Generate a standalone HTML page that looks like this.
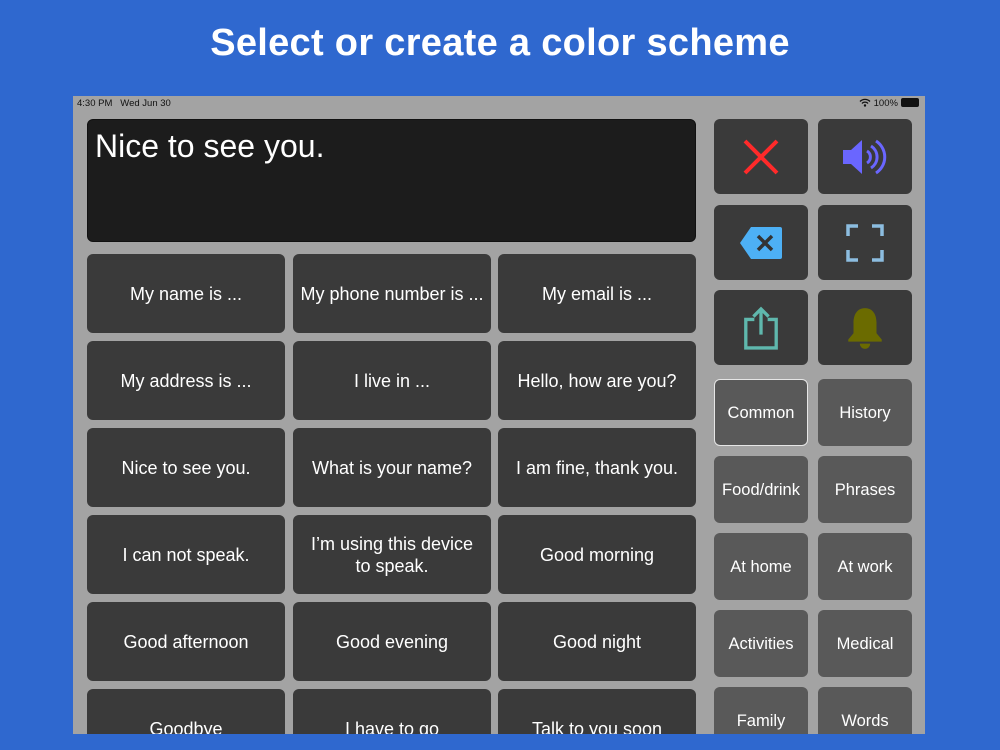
<!DOCTYPE html><html><head><style>
body{margin:0;width:1000px;height:750px;background:#2f68cf;position:relative;overflow:hidden;font-family:"Liberation Sans",sans-serif}
.t{position:absolute;top:22px;left:0;width:1000px;text-align:center;color:#fff;font-size:38px;font-weight:bold;letter-spacing:0.3px}
.s{position:absolute;left:73px;top:96px;width:852px;height:638px;background:#a3a3a3;overflow:hidden}
.b{position:absolute;border-radius:6px;background:#3a3a3a;color:#fff;display:flex;align-items:center;justify-content:center;text-align:center;font-size:18px;line-height:22px}
.c{background:#595959;font-size:16.5px}
.st{position:absolute;top:2px;font-size:9.5px;color:#111}
</style></head><body>
<div class="t">Select or create a color scheme</div>
<div class="s">
<div class="st" style="left:4px">4:30 PM&nbsp;&nbsp;&nbsp;Wed Jun 30</div>
<div class="st" style="left:786px">
<svg width="12" height="9" viewBox="0 0 12 9" style="vertical-align:-1px"><path d="M1 3.5A7 7 0 0 1 11 3.5M3 5.5A4 4 0 0 1 9 5.5" stroke="#111" stroke-width="1.3" fill="none"/><circle cx="6" cy="7.5" r="1.2" fill="#111"/></svg> 100% <span style="display:inline-block;width:16px;height:7px;background:#111;border:1px solid #111;border-radius:2px;vertical-align:-1px"></span></div>
<div class="b" style="left:14px;top:23px;width:609px;height:123px;background:#1c1c1c;border:1px solid #111;box-sizing:border-box;align-items:flex-start;justify-content:flex-start;font-size:32px;line-height:40px;padding:6px 7px">Nice to see you.</div>
<div class="b" style="left:14px;top:158px;width:198px;height:79px">My name is ...</div>
<div class="b" style="left:220px;top:158px;width:198px;height:79px">My phone number is ...</div>
<div class="b" style="left:425px;top:158px;width:198px;height:79px">My email is ...</div>
<div class="b" style="left:14px;top:245px;width:198px;height:79px">My address is ...</div>
<div class="b" style="left:220px;top:245px;width:198px;height:79px">I live in ...</div>
<div class="b" style="left:425px;top:245px;width:198px;height:79px">Hello, how are you?</div>
<div class="b" style="left:14px;top:332px;width:198px;height:79px">Nice to see you.</div>
<div class="b" style="left:220px;top:332px;width:198px;height:79px">What is your name?</div>
<div class="b" style="left:425px;top:332px;width:198px;height:79px">I am fine, thank you.</div>
<div class="b" style="left:14px;top:419px;width:198px;height:79px">I can not speak.</div>
<div class="b" style="left:220px;top:419px;width:198px;height:79px">I’m using this device<br>to speak.</div>
<div class="b" style="left:425px;top:419px;width:198px;height:79px">Good morning</div>
<div class="b" style="left:14px;top:506px;width:198px;height:79px">Good afternoon</div>
<div class="b" style="left:220px;top:506px;width:198px;height:79px">Good evening</div>
<div class="b" style="left:425px;top:506px;width:198px;height:79px">Good night</div>
<div class="b" style="left:14px;top:593px;width:198px;height:79px">Goodbye</div>
<div class="b" style="left:220px;top:593px;width:198px;height:79px">I have to go</div>
<div class="b" style="left:425px;top:593px;width:198px;height:79px">Talk to you soon</div>
<div class="b" style="left:641px;top:23px;width:94px;height:75px"><svg width="40" height="40" viewBox="0 0 40 40"><path d="M4 4L36 36M36 4L4 36" stroke="#ff2a2a" stroke-width="4"/></svg></div>
<div class="b" style="left:745px;top:23px;width:94px;height:75px"><svg width="50" height="40" viewBox="0 0 50 40"><path d="M3 13h8l11-10v34l-11-10H3z" fill="#6a66ff"/><path d="M27 14a7 7 0 0 1 0 12M31 9a13 13 0 0 1 0 22M36 4a19 19 0 0 1 0 32" stroke="#6a66ff" stroke-width="3" fill="none"/></svg></div>
<div class="b" style="left:641px;top:109px;width:94px;height:75px"><svg width="44" height="34" viewBox="0 0 44 34"><path d="M12 1h29a2 2 0 0 1 2 2v28a2 2 0 0 1-2 2H12L1 17z" fill="#4db0f5"/><path d="M19 10l14 14M33 10L19 24" stroke="#333" stroke-width="3.5"/></svg></div>
<div class="b" style="left:745px;top:109px;width:94px;height:75px"><svg width="38" height="38" viewBox="0 0 38 38"><path d="M2 12V2h10M26 2h10v10M36 26v10H26M12 36H2V26" stroke="#8cbde0" stroke-width="3.5" fill="none"/></svg></div>
<div class="b" style="left:641px;top:194px;width:94px;height:75px"><svg width="38" height="44" viewBox="0 0 40 46"><path d="M13 14H4v30h32V14h-9" stroke="#5fb8ad" stroke-width="3.5" fill="none"/><path d="M20 30V4M12 11l8-8 8 8" stroke="#5fb8ad" stroke-width="3.5" fill="none"/></svg></div>
<div class="b" style="left:745px;top:194px;width:94px;height:75px"><svg width="40" height="46" viewBox="0 0 38 44"><path d="M19 3c-8 0-11 7-11 14v10l-5 6v2h32v-2l-5-6V17c0-7-3-14-11-14z" fill="#6b6b00"/><path d="M14 37h10a5 5 0 0 1-10 0z" fill="#6b6b00"/></svg></div>
<div class="b c" style="left:641px;top:283px;width:94px;height:67px;border:1.5px solid #e6e6e6;box-sizing:border-box">Common</div>
<div class="b c" style="left:745px;top:283px;width:94px;height:67px">History</div>
<div class="b c" style="left:641px;top:360px;width:94px;height:67px">Food/drink</div>
<div class="b c" style="left:745px;top:360px;width:94px;height:67px">Phrases</div>
<div class="b c" style="left:641px;top:437px;width:94px;height:67px">At home</div>
<div class="b c" style="left:745px;top:437px;width:94px;height:67px">At work</div>
<div class="b c" style="left:641px;top:514px;width:94px;height:67px">Activities</div>
<div class="b c" style="left:745px;top:514px;width:94px;height:67px">Medical</div>
<div class="b c" style="left:641px;top:591px;width:94px;height:67px">Family</div>
<div class="b c" style="left:745px;top:591px;width:94px;height:67px">Words</div>
</div>
</body></html>
